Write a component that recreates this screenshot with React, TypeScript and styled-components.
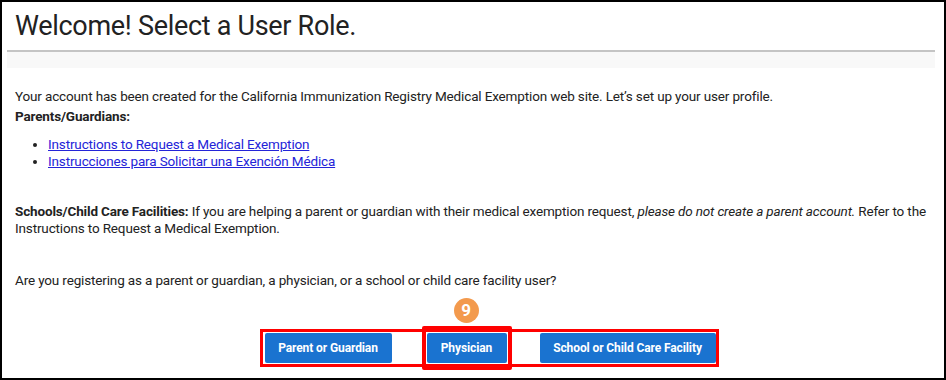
import React from 'react';
import styled, { createGlobalStyle } from 'styled-components';

const GlobalStyle = createGlobalStyle`
  html, body {
    margin: 0;
    padding: 0;
    background: #ffffff;
  }
  body {
    font-family: Roboto, "Liberation Sans", Arial, sans-serif;
    color: #222222;
  }
`;

const Frame = styled.div`
  width: 946px;
  height: 380px;
  box-sizing: border-box;
  border: 2px solid #000000;
  background: #ffffff;
  overflow: hidden;
`;

const Page = styled.div`
  margin: 0 9px 0 5px;
`;

const Header = styled.header`
  padding: 6px 8px 6px;
  border-bottom: 2px solid #c4c4c4;

  h1 {
    margin: 0;
    font-size: 27px;
    letter-spacing: -0.3px;
    line-height: 36px;
    font-weight: 400;
    color: #222222;
  }
`;

const Band = styled.div`
  height: 16px;
  background: #f8f8f8;
`;

const Content = styled.main`
  padding: 20px 0 0 8px;
  font-size: 13.5px;
  letter-spacing: -0.15px;
  line-height: 17px;

  p {
    margin: 0;
  }
  strong {
    font-weight: 700;
  }
`;

const Block = styled.p<{ $top: number }>`
  margin-top: ${({ $top }) => $top}px !important;
`;

const LinkList = styled.ul`
  margin: 11px 0 0;
  padding-left: 33px;

  li {
    line-height: 17px;
  }
  a {
    color: #2424d8;
    text-decoration: underline;
  }
`;

const ButtonArea = styled.div`
  display: flex;
  justify-content: center;
  padding-left: 28px;
  margin-top: 40px;
`;

const ButtonGroup = styled.div`
  display: flex;
  align-items: flex-start;
  border: 3px solid #ff0000;
  padding: 1px 0 0 2px;
  height: 31px;
  box-sizing: content-box;
`;

const RoleButton = styled.button<{ $width: number }>`
  width: ${({ $width }) => $width}px;
  height: 30px;
  border: none;
  border-radius: 2px;
  background: #1a73d0;
  color: #ffffff;
  font-family: Roboto, "Liberation Sans", Arial, sans-serif;
  font-size: 12px;
  letter-spacing: -0.1px;
  font-weight: 700;
  padding: 0;
  cursor: pointer;
`;

const Spacer = styled.div<{ $width: number }>`
  width: ${({ $width }) => $width}px;
  flex: none;
`;

const Marked = styled.div`
  position: relative;
  display: flex;
`;

const Highlight = styled.span`
  position: absolute;
  left: -5px;
  right: -5px;
  top: -7px;
  bottom: -7px;
  border: 4px solid #ff0000;
  border-radius: 2px;
  pointer-events: none;
`;

const StepBadge = styled.span`
  position: absolute;
  left: 50%;
  top: -35px;
  width: 25px;
  height: 25px;
  margin-left: -13px;
  border-radius: 50%;
  background: #f39a4d;
  color: #ffffff;
  font-size: 17px;
  font-weight: 700;
  line-height: 25px;
  text-align: center;
`;

export default function App() {
  return (
    <>
      <GlobalStyle />
      <Frame>
        <Page>
          <Header>
            <h1>Welcome! Select a User Role.</h1>
          </Header>
          <Band />
          <Content>
            <p>
              Your account has been created for the California Immunization Registry Medical Exemption web site. Let’s
              set up your user profile.
            </p>
            <Block $top={3}>
              <strong>Parents/Guardians:</strong>
            </Block>
            <LinkList>
              <li>
                <a href="#">Instructions to Request a Medical Exemption</a>
              </li>
              <li>
                <a href="#">Instrucciones para Solicitar una Exención Médica</a>
              </li>
            </LinkList>
            <Block $top={33}>
              <strong>Schools/Child Care Facilities:</strong>
              <span> If you are helping a parent or guardian with their medical exemption request, </span>
              <em>please do not create a parent account.</em>
              <span> Refer to the Instructions to Request a Medical Exemption.</span>
            </Block>
            <Block $top={35}>
              Are you registering as a parent or guardian, a physician, or a school or child care facility user?
            </Block>
            <ButtonArea>
              <ButtonGroup>
                <RoleButton $width={127}>Parent or Guardian</RoleButton>
                <Spacer $width={35} />
                <Marked>
                  <StepBadge>9</StepBadge>
                  <Highlight />
                  <RoleButton $width={80}>Physician</RoleButton>
                </Marked>
                <Spacer $width={33} />
                <RoleButton $width={176}>School or Child Care Facility</RoleButton>
              </ButtonGroup>
            </ButtonArea>
          </Content>
        </Page>
      </Frame>
    </>
  );
}
